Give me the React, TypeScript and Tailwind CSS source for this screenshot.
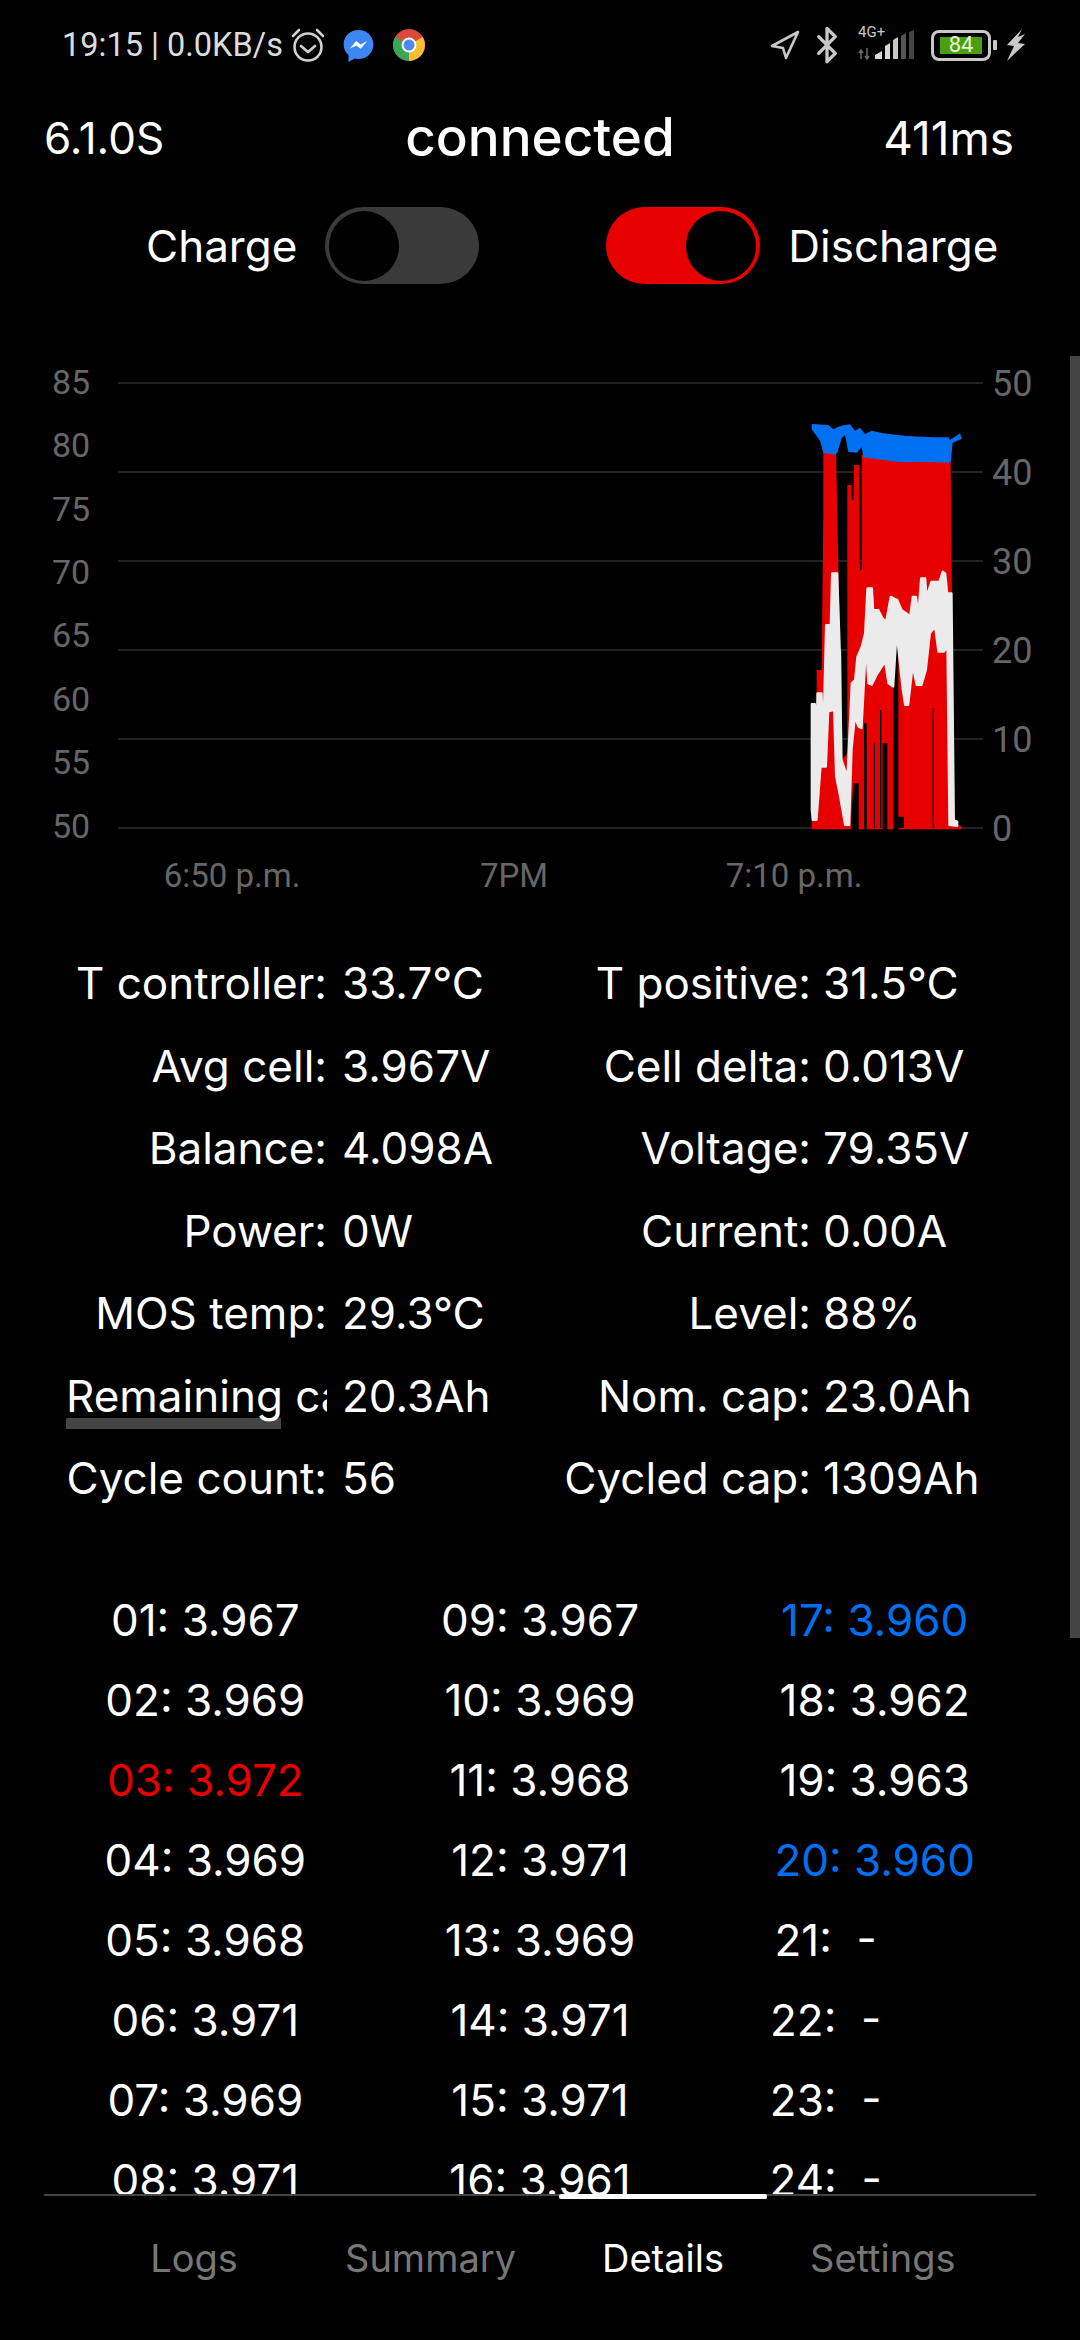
import { Bluetooth } from "lucide-react";

const font = "font-['Inter','Noto_Sans',sans-serif]";

const leftStats = [
  ["T controller:", "33.7°C"],
  ["Avg cell:", "3.967V"],
  ["Balance:", "4.098A"],
  ["Power:", "0W"],
  ["MOS temp:", "29.3°C"],
  ["Remaining capacity:", "20.3Ah"],
  ["Cycle count:", "56"],
];

const rightStats = [
  ["T positive:", "31.5°C"],
  ["Cell delta:", "0.013V"],
  ["Voltage:", "79.35V"],
  ["Current:", "0.00A"],
  ["Level:", "88%"],
  ["Nom. cap:", "23.0Ah"],
  ["Cycled cap:", "1309Ah"],
];

const cells = [
  ["01: 3.967", "09: 3.967", "17: 3.960"],
  ["02: 3.969", "10: 3.969", "18: 3.962"],
  ["03: 3.972", "11: 3.968", "19: 3.963"],
  ["04: 3.969", "12: 3.971", "20: 3.960"],
  ["05: 3.968", "13: 3.969", "21:  -"],
  ["06: 3.971", "14: 3.971", "22:  -"],
  ["07: 3.969", "15: 3.971", "23:  -"],
  ["08: 3.971", "16: 3.961", "24:  -"],
];

const tabs = ["Logs", "Summary", "Details", "Settings"];

function cellClass(text: string) {
  if (text === "03: 3.972") return "text-[#e80000]";
  if (text === "17: 3.960" || text === "20: 3.960") return "text-[#0070f0]";
  if (text.endsWith("-")) return "pr-[98px] text-white";
  return "text-white";
}

function StatusBar() {
  return (
    <div className="flex h-[88px] items-center pl-[62px] pr-[54px] pt-[2px] text-[#dcdcdc]">
      <span className="font-['Roboto',sans-serif] text-[32.5px] whitespace-nowrap">19:15 | 0.0KB/s</span>
      <svg className="ml-[8px]" width="34" height="36" viewBox="0 0 34 36" fill="none" stroke="#d0d0d0" strokeWidth="2.6">
        <circle cx="17" cy="20" r="13.5" />
        <path d="M10 19l7 6 7-6" strokeLinecap="round" strokeLinejoin="round" />
        <path d="M2 9l6-6M32 9l-6-6" strokeLinecap="round" />
      </svg>
      <svg className="ml-[18px]" width="31" height="33" viewBox="0 0 28 30">
        <path d="M14 1C6.500 1 .5 6.600.5 14c0 3.900 1.600 7.300 4.400 9.700V30l5.600-3.200c1.100.3 2.300.5 3.500.5 7.500 0 13.500-5.800 13.500-13.300S21.500 1 14 1z" fill="#3f86f5" />
        <path d="M6 18l6-7 4 3 6-3-6 7-4-3z" fill="#fff" />
      </svg>
      <svg className="ml-[19px]" width="32" height="32" viewBox="0 0 28 28">
        <circle cx="14" cy="14" r="14" fill="#d9483b" />
        <path d="M14 14L26.100 7A14 14 0 0 1 14 28z" fill="#fbc02d" />
        <path d="M14 14L14 28A14 14 0 0 1 1.900 7z" fill="#3aa757" />
        <circle cx="14" cy="14" r="6.500" fill="#fff" />
        <circle cx="14" cy="14" r="4.800" fill="#4a8af4" />
      </svg>
      <div className="ml-auto flex items-center">
        <svg width="30" height="30" viewBox="0 0 30 30" fill="none" stroke="#c8c8c8" strokeWidth="2.600" strokeLinejoin="round">
          <path d="M28 2L2 16l11 2 3 10z" />
        </svg>
        <Bluetooth className="ml-[7px]" size={40} color="#c8c8c8" strokeWidth={2} />
        <div className="relative ml-[11px] h-[32px] w-[58px]">
          <span className="absolute left-0 top-[-4px] font-['Roboto',sans-serif] text-[15px] leading-[15px] text-[#c8c8c8]">4G+</span>
          <svg className="absolute left-0 top-0" width="58" height="32" viewBox="0 0 58 32">
            <path d="M3 30v-9M1 24l2-3 2 3M9 19v11M7 27l2 3 2-3" stroke="#666" strokeWidth="1.600" fill="none" />
            <path d="M17 30v-4l7-4v8z" fill="#d8d8d8" />
            <path d="M27 30V17l5-3v16z" fill="#d8d8d8" />
            <path d="M35 30V11l5-3v22z" fill="#c8c8c8" />
            <path d="M43 30V7l5-3v26z" fill="#555" />
            <path d="M51 30V3l5-2v29z" fill="#444" />
          </svg>
        </div>
        <div className="ml-[15px] flex h-[31px] w-[60px] items-center justify-center rounded-[8px] border-[3px] border-[#c8c8c8]">
          <span className="flex h-[17px] w-[42px] items-center justify-center bg-[#4b9e0f] font-['Roboto',sans-serif] text-[22px] leading-none text-[#e4f5d5]">84</span>
        </div>
        <div className="ml-[2px] h-[10px] w-[4px] rounded-[1px] bg-[#c8c8c8]" />
        <svg className="ml-[8px]" width="21" height="32" viewBox="0 0 21 32">
          <path d="M17 0L2 16l7 1-7 15 18-17-7-1 7-9-7 3z" fill="#c8c8c8" />
        </svg>
      </div>
    </div>
  );
}

function Toggle({ on }: { on: boolean }) {
  return (
    <div className={`flex h-[77px] w-[154px] items-center rounded-full px-[4px] ${on ? "justify-end bg-[#e80000]" : "justify-start bg-[#3a3a3a]"}`}>
      <div className="h-[70px] w-[70px] rounded-full bg-black" />
    </div>
  );
}

function Chart() {
  const gridY = [383, 472, 561, 650, 739, 828];
  const leftLabels = [
    [85, 382],
    [80, 445],
    [75, 509],
    [70, 572],
    [65, 635],
    [60, 699],
    [55, 762],
    [50, 826],
  ];
  const rightLabels = [
    [50, 383],
    [40, 472],
    [30, 561],
    [20, 650],
    [10, 739],
    [0, 828],
  ];
  return (
    <svg className="mt-[66px] block" width="1080" height="550" viewBox="0 350 1080 550" style={{ fontFamily: "Roboto, sans-serif" }}>
      {gridY.map((y) => (
        <line key={y} x1="118" x2="983" y1={y} y2={y} stroke="#222" strokeWidth="2" />
      ))}
      {leftLabels.map(([v, y]) => (
        <text key={v} x="71" y={y + 12} textAnchor="middle" fontSize="34" fill="#666">
          {v}
        </text>
      ))}
      {rightLabels.map(([v, y]) => (
        <text key={v} x="992" y={y + 13} fontSize="36" fill="#666">
          {v}
        </text>
      ))}
      <text x="232" y="887" textAnchor="middle" fontSize="33" fill="#666">6:50 p.m.</text>
      <text x="514" y="887" textAnchor="middle" fontSize="33" fill="#666">7PM</text>
      <text x="794" y="887" textAnchor="middle" fontSize="33" fill="#666">7:10 p.m.</text>
      <g transform="translate(760 400) scale(0.3333)">
        <path
          fill="#e80000"
          d="M155 1288V1240L170 1250V810H185L190 340L190 150H228L232 340L240 750H245V1080L262 1060V255H275V300H280L282 195H297L300 510H305V165L572 185L576 600V1100L585 1270L605 1280V1288Z"
        />
        <g fill="#000">
          <path d="M280 1150H296V1292H272Z" />
          <path d="M312 970H320V1292H312Z" />
          <path d="M342 1030H345V1284H342Z" />
          <path d="M360 930H364V1284H360Z" />
          <path d="M368 1030H382V1292H368Z" />
          <path d="M400 720H415V1250H432V1284H415V1292H400Z" />
          <path d="M518 925H522V1284H518Z" />
          <path d="M574 1262L595 1275H576Z" />
        </g>
        <path
          fill="#0070f0"
          d="M155 72L205 75L220 88L235 80L250 76L270 73L285 92L300 83L315 102L335 92L370 100L440 108L520 112L565 112L570 120L600 100L606 116L578 128L572 188L500 186L420 187L310 172L305 142L290 158L265 156L255 105L245 115L232 158L225 164L190 158L180 122L155 88Z"
        />
        <path
          fill="#ebebeb"
          stroke="#ebebeb"
          strokeWidth="6"
          strokeLinejoin="round"
          d="M155 912L165 912L170 1000L172 880L185 880L190 1000L198 675L212 675L216 520L232 520L240 760L245 1080L262 1130L275 850L285 840L292 770L305 740L315 700L322 565L336 565L340 630L355 630L368 655L378 665L392 590L412 600L425 630L440 640L450 650L458 590L468 590L475 640L483 535L496 535L500 590L514 545L538 545L548 515L556 520L562 580L575 580L582 1260L592 1265V1278L568 1275L562 740L552 755L535 755L525 680L510 700L498 810L485 855L470 855L458 800L445 915L435 915L428 870L410 700L400 860L385 850L375 785L350 825L335 855L325 850L318 740L305 985L295 980L285 950L275 1050L268 1275L255 1275L240 1190L228 1130L222 930L205 935L198 1100L182 1100L170 1260L158 1260L155 1230Z"
        />
      </g>
    </svg>
  );
}

function Stat({ label, value, boxClass, gapClass }: { label: string; value: string; boxClass: string; gapClass: string }) {
  return (
    <div className="flex h-[82.5px] items-center">
      <div className={`overflow-hidden whitespace-nowrap text-right ${boxClass}`}>{label}</div>
      <div className={`whitespace-nowrap ${gapClass}`}>{value}</div>
    </div>
  );
}

export default function App() {
  return (
    <div className={`relative h-[2340px] w-[1080px] overflow-hidden bg-black text-white ${font}`}>
      <StatusBar />
      <div className="h-[2106px] overflow-hidden">
        <div className="grid h-[100px] grid-cols-[1fr_auto_1fr] items-center px-[44px] text-[44px]">
          <span>6.1.0S</span>
          <span className="text-[53px] font-medium">connected</span>
          <span className="pr-[22px] text-right text-[46px]">411ms</span>
        </div>
        <div className="mt-[19px] flex h-[77px] items-center pl-[146px] text-[44px]">
          <span>Charge</span>
          <div className="ml-[28px]">
            <Toggle on={false} />
          </div>
          <div className="ml-[127px]">
            <Toggle on />
          </div>
          <span className="ml-[28px]">Discharge</span>
        </div>
        <Chart />
        <div className="relative mt-[42px] grid grid-cols-2 text-[44px]">
          <div className="absolute left-[66px] top-[476px] h-[11px] w-[215px] bg-[#444]" />
          <div className="relative">
            {leftStats.map(([l, v]) => (
              <Stat key={l} label={l} value={v} boxClass="ml-[66px] w-[261px]" gapClass="ml-[15px]" />
            ))}
          </div>
          <div>
            {rightStats.map(([l, v]) => (
              <Stat key={l} label={l} value={v} boxClass="w-[271px]" gapClass="ml-[12px]" />
            ))}
          </div>
        </div>
        <div className="mt-[60px] grid grid-cols-3 px-[38px] text-[44px]">
          {cells.map((row) =>
            row.map((c) => (
              <div key={c} className={`flex h-[80px] items-center justify-center whitespace-pre ${cellClass(c)}`}>
                {c}
              </div>
            )),
          )}
        </div>
      </div>
      <div className="mx-[44px] flex border-t-2 border-[#444] pl-[42px] pt-[34px] text-[38px]">
        {tabs.map((t) => (
          <div key={t} className={`relative px-[43px] text-center ${t === "Logs" ? "min-w-[216px]" : ""} ${t === "Details" ? "text-white" : "text-[#777]"}`}>
            {t}
            {t === "Details" && <div className="absolute left-0 right-0 top-[-36px] h-[5px] rounded-[2px] bg-white" />}
          </div>
        ))}
      </div>
      <div className="absolute right-0 top-[356px] h-[1282px] w-[10px] bg-[#444]" />
    </div>
  );
}
